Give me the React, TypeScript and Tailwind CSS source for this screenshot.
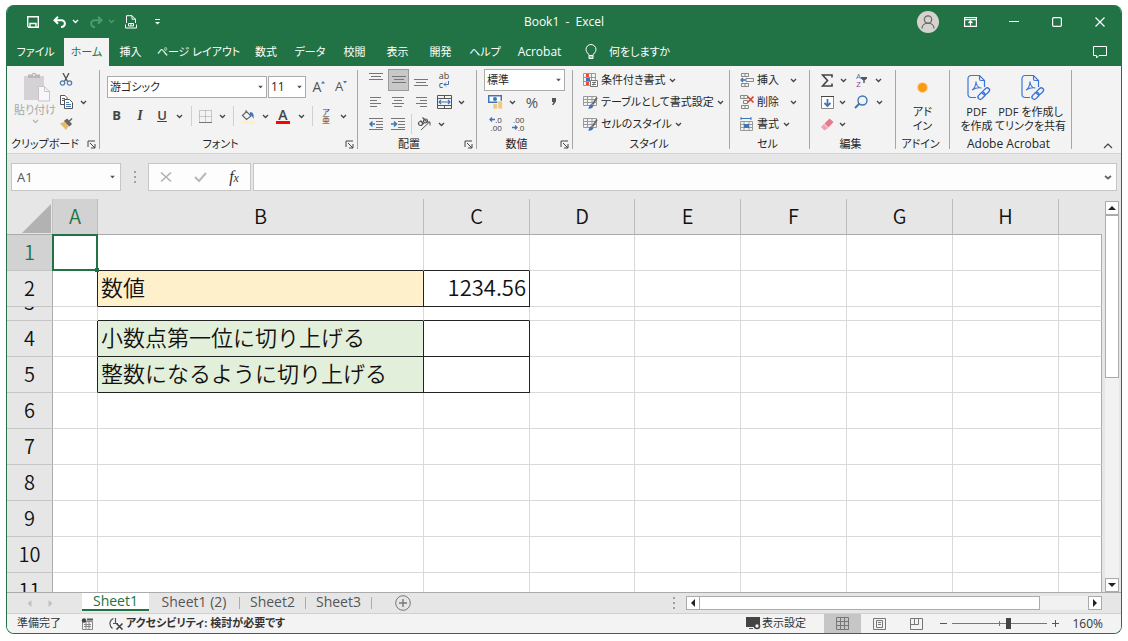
import type { ReactNode } from "react";

const UI_FONT = "font-['Open_Sans','Noto_Sans_CJK_JP',sans-serif]";
const CELL_FONT = "font-['Noto_Sans_CJK_JP',sans-serif] [font-feature-settings:normal]";

const TABS = [
  { label: "ファイル", width: "w-[57px]" },
  { label: "ホーム", width: "w-[45px]", active: true },
  { label: "挿入", width: "w-[43px]" },
  { label: "ページ レイアウト", width: "w-[93px]" },
  { label: "数式", width: "w-[42px]" },
  { label: "データ", width: "w-[46px]" },
  { label: "校閲", width: "w-[43px]" },
  { label: "表示", width: "w-[43px]" },
  { label: "開発", width: "w-[43px]" },
  { label: "ヘルプ", width: "w-[46px]" },
  { label: "Acrobat", width: "w-[63px]", latin: true },
];

const COLUMNS = ["A", "B", "C", "D", "E", "F", "G", "H", ""];
const ROWS = [1, 2, 3, 4, 5, 6, 7, 8, 9, 10, 11];

const VALUES: Record<string, string> = {
  B2: "数値",
  C2: "1234.56",
  B4: "小数点第一位に切り上げる",
  B5: "整数になるように切り上げる",
};

const FILLS: Record<string, string> = {
  B2: "bg-[#fff0cc]",
  B4: "bg-[#e2efda]",
  B5: "bg-[#e2efda]",
};

// cells whose right / bottom edge is part of a drawn table border
const DARK_RIGHT = ["A2", "B2", "C2", "A4", "B4", "C4", "A5", "B5", "C5"];
const DARK_BOTTOM = ["B1", "C1", "B2", "C2", "B3", "C3", "B4", "C4", "B5", "C5"];

function Icon({ w = 16, h = 16, children }: { w?: number; h?: number; children: ReactNode }) {
  return (
    <svg width={w} height={h} viewBox={`0 0 ${w} ${h}`} fill="none" stroke="#555" strokeWidth={1} className="shrink-0" aria-hidden="true">
      {children}
    </svg>
  );
}

function Chevron({ color = "#444" }: { color?: string }) {
  return (
    <svg width="7" height="5" viewBox="0 0 7 5" fill="none" stroke={color} strokeWidth={1.3} className="shrink-0" aria-hidden="true">
      <path d="M1 1l2.5 2.5L6 1" />
    </svg>
  );
}

function Caret() {
  return (
    <svg width="5" height="3" viewBox="0 0 5 3" fill="#555" className="pointer-events-none absolute right-1 top-1/2 -translate-y-1/2" aria-hidden="true">
      <path d="M0 0h5L2.5 3z" />
    </svg>
  );
}

function Tool({ label, width, children, className = "" }: { label: string; width: string; children: ReactNode; className?: string }) {
  return (
    <button type="button" aria-label={label} className={`flex h-[22px] shrink-0 items-center justify-center ${width} ${className}`}>
      {children}
    </button>
  );
}

function Select({ label, value, className }: { label: string; value: string; className: string }) {
  return (
    <span className={`relative block shrink-0 ${className}`}>
      <select aria-label={label} className="h-full w-full appearance-none border border-[#ababab] bg-white pl-[2px] text-[#262626] outline-none">
        <option>{value}</option>
      </select>
      <Caret />
    </span>
  );
}

function Group({ label, width, launcher, latin, children }: { label: string; width: string; launcher?: boolean; latin?: boolean; children: ReactNode }) {
  return (
    <section className={`flex shrink-0 pt-[3px] ${width}`}>
      <div className="flex min-w-0 flex-1 flex-col">
        <div className="h-[66px]">{children}</div>
        <div className="flex h-[18px] items-center justify-center">
          <span className={`flex-1 whitespace-nowrap pr-1 text-center ${latin ? "text-xs" : ""}`}>{label}</span>
          {launcher && (
            <button type="button" aria-label={`${label}の設定`} className="mr-[3px]">
              <Icon w={9} h={9}>
                <path d="M1 7V1h7M3 3l5 5M8 4v4H4" stroke="#444" />
              </Icon>
            </button>
          )}
        </div>
      </div>
      <div className="mb-1 mt-px w-px bg-[#a6a6a6]" />
    </section>
  );
}

function Lines({ rows }: { rows: [number, number, number][] }) {
  return (
    <Icon w={14} h={14}>
      {rows.map(([x1, x2, y]) => (
        <path key={y} d={`M${x1} ${y + 0.5}H${x2}`} stroke="#777" />
      ))}
    </Icon>
  );
}

function Separator() {
  return <span className="h-5 w-px shrink-0 bg-[#d0d0d0]" />;
}

function TitleBar() {
  return (
    <header className="grid h-[33px] grid-cols-[1fr_auto_1fr] items-center text-white">
      <div className="flex items-center pl-3">
        <Tool label="保存" width="w-7">
          <Icon w={12} h={12}>
            <path d="M.7.7h10.6v10.6H1.7l-1-1zM3 11V7.5h6V11" stroke="#fff" strokeWidth={1.4} />
          </Icon>
        </Tool>
        <Tool label="元に戻す" width="w-[25px]">
          <Icon w={14} h={12}>
            <path d="M5 .7L1.500 4.200 5 7.700M2 4.200h6.500a3.300 3.300 0 0 1 0 6.800H8" stroke="#fff" strokeWidth={2} />
          </Icon>
        </Tool>
        <Tool label="元に戻す履歴" width="w-[7px]"><Chevron color="#fff" /></Tool>
        <Tool label="やり直し" width="w-[25px]" className="ml-1">
          <Icon w={14} h={12}>
            <path d="M9 .7l3.500 3.500L9 7.700M12 4.200H5.500a3.300 3.300 0 0 0 0 6.800H6" stroke="#4f9a6f" strokeWidth={2} />
          </Icon>
        </Tool>
        <Tool label="やり直し履歴" width="w-[7px]"><Chevron color="#4f9a6f" /></Tool>
        <Tool label="印刷プレビュー" width="w-8">
          <Icon w={12} h={14}>
            <path d="M1.500 8V.7h5.500l3.500 3.500V8M7 .7v3.500h3.500M.5 9.500v3.500h11V9.500" stroke="#fff" />
            <path d="M3.500 8.500h5v2.500h-5zM6 8.500V11" stroke="#fff" />
          </Icon>
        </Tool>
        <Tool label="クイック アクセスのカスタマイズ" width="w-5">
          <Icon w={5} h={6}>
            <path d="M0 .5h5" stroke="#fff" />
            <path d="M0 3h5L2.500 5.500z" fill="#fff" stroke="none" />
          </Icon>
        </Tool>
      </div>
      <h1 className="whitespace-pre text-xs">Book1  -  Excel</h1>
      <div className="flex justify-end">
        <Tool label="アカウント" width="w-[43px]">
          <Icon w={22} h={22}>
            <circle cx="11" cy="11" r="11" fill="#d5d2d0" stroke="none" />
            <circle cx="11" cy="8.500" r="3.700" stroke="#666" strokeWidth={1.200} />
            <path d="M5 17.500c0-7 12-7 12 0" stroke="#666" strokeWidth={1.200} />
          </Icon>
        </Tool>
        <Tool label="リボンの表示オプション" width="w-[43px]">
          <Icon w={13} h={10}>
            <path d="M.6.6h11.800v8.800H.6zM.6 2.700h11.800M6.500 8.500v-4M4.500 6l2-2 2 2" stroke="#fff" strokeWidth={1.200} />
          </Icon>
        </Tool>
        <Tool label="最小化" width="w-[43px]">
          <Icon w={10} h={10}><path d="M0 4.500h10" stroke="#fff" /></Icon>
        </Tool>
        <Tool label="最大化" width="w-[43px]">
          <Icon w={10} h={10}><rect x=".6" y=".6" width="8.800" height="8.800" rx="1.200" stroke="#fff" strokeWidth={1.200} /></Icon>
        </Tool>
        <Tool label="閉じる" width="w-[43px]">
          <Icon w={10} h={10}><path d="M.5.5l9 9M9.500.5l-9 9" stroke="#fff" strokeWidth={1.200} /></Icon>
        </Tool>
      </div>
    </header>
  );
}

function TabBar() {
  return (
    <nav className="flex h-7 items-center text-white">
      {TABS.map((tab) => (
        <button
          key={tab.label}
          type="button"
          className={`h-7 shrink-0 whitespace-nowrap ${tab.width} ${tab.active ? "bg-[#f3f3f3] text-[#217346]" : ""} ${tab.latin ? "text-xs" : ""}`}
        >
          {tab.label}
        </button>
      ))}
      <button type="button" className="ml-[14px] flex items-center gap-3">
        <Icon w={12} h={16}>
          <path d="M4 11.500c0-2-3-2.700-3-6a5 5 0 0 1 10 0c0 3.300-3 4-3 6zM4 11.500v3h4v-3M4 13h4" stroke="#fff" />
        </Icon>
        何をしますか
      </button>
      <button type="button" aria-label="コメント" className="ml-auto mr-[14px]">
        <Icon w={14} h={13}>
          <path d="M.5.5h13v9H6l-2.500 2.500V9.500h-3z" stroke="#fff" />
        </Icon>
      </button>
    </nav>
  );
}

function ClipboardGroup() {
  return (
    <Group label="クリップボード" width="w-[93px]" launcher>
      <div className="flex pl-2">
        <button type="button" disabled className="flex h-[66px] w-10 flex-col items-center whitespace-nowrap pt-[3px] leading-4 text-[#a8a8a8]">
          <span className="pl-1">
            <Icon w={28} h={30}>
              <path d="M1 4h20v24H1z" fill="#d4d2d4" stroke="none" />
              <path d="M5 6V2.500h3.500a2.700 2.700 0 0 1 5 0H17V6z" fill="#b9b7b9" stroke="none" />
              <circle cx="11" cy="3" r="1" fill="#f3f3f3" stroke="none" />
              <path d="M15.500 14.500h6l5 5v9.500h-11zM21.500 14.500v5h5" fill="#f8f6f9" stroke="#c9c5cb" />
            </Icon>
          </span>
          <span>貼り付け</span>
          <span className="pt-px"><Chevron color="#b5b5b5" /></span>
        </button>
        <div className="ml-[2px]">
          <Tool label="切り取り" width="w-[18px]">
            <Icon w={14} h={14}>
              <path d="M4 0l4.500 8.500M10 0L5.500 8.500" stroke="#555" strokeWidth={1.400} />
              <circle cx="3.500" cy="10" r="2.200" stroke="#4a7ab5" strokeWidth={1.200} />
              <circle cx="10.500" cy="10" r="2.200" stroke="#4a7ab5" strokeWidth={1.200} />
            </Icon>
          </Tool>
          <div className="flex">
            <Tool label="コピー" width="w-[18px]">
              <Icon w={14} h={14}>
                <path d="M1.500.5h4.500l2 2v7h-6.500zM3 3.500h3M3 5.500h3" fill="#fff" />
                <path d="M5.500 4.500h5l3 3v6h-8z" fill="#fff" />
                <path d="M7 7.500h3M7 9.500h5M7 11.500h5" stroke="#4a7ab5" />
              </Icon>
            </Tool>
            <Tool label="コピーのオプション" width="w-4"><Chevron /></Tool>
          </div>
          <Tool label="書式のコピー/貼り付け" width="w-[18px]">
            <Icon w={14} h={14}>
              <path d="M1 6.500l5-2 4 4-3 4.500z" fill="#e9b96a" stroke="none" />
              <path d="M6 4l4.500 4.500 1.500-1.500L8 2.500zM9.500 5L13 1.500" fill="#666" strokeWidth={1.500} stroke="#666" />
            </Icon>
          </Tool>
        </div>
      </div>
    </Group>
  );
}

function FontGroup() {
  return (
    <Group label="フォント" width="w-[258px]" launcher>
      <div className="flex h-9 items-center pl-[7px]">
        <Select label="フォント名" value="游ゴシック" className="h-[22px] w-40" />
        <Select label="フォント サイズ" value="11" className="ml-px h-[22px] w-[38px] text-xs" />
        <Tool label="フォント サイズの拡大" width="w-6" className="ml-px text-sm text-[#555]">
          A<Icon w={4} h={12}><path d="M0 2.500l2-2.500 2 2.500z" fill="#3f74b5" stroke="none" /></Icon>
        </Tool>
        <Tool label="フォント サイズの縮小" width="w-5" className="text-[13px] text-[#555]">
          A<Icon w={4} h={12}><path d="M0 0l2 2.500L4 0z" fill="#3f74b5" stroke="none" /></Icon>
        </Tool>
      </div>
      <div className="flex h-[22px] items-center pl-1 text-[#444]">
        <Tool label="太字" width="w-[25px]" className="text-[13px] font-bold">B</Tool>
        <Tool label="斜体" width="w-[22px]" className="font-['Liberation_Serif',serif] text-sm font-bold italic">I</Tool>
        <Tool label="下線" width="w-[22px]" className="text-[13px] font-semibold underline">U</Tool>
        <Tool label="下線の種類" width="w-3"><Chevron /></Tool>
        <span className="w-[6px]" />
        <Separator />
        <Tool label="罫線" width="w-[26px]">
          <Icon w={13} h={13}>
            <path d="M.5.5h12v12H.5zM6.500.5v12M.5 6.500h12" stroke="#9a9a9a" strokeDasharray="1 1" />
            <path d="M0 12.500h13" stroke="#777" />
          </Icon>
        </Tool>
        <Tool label="罫線の種類" width="w-2"><Chevron /></Tool>
        <span className="w-[7px]" />
        <Separator />
        <Tool label="塗りつぶしの色" width="w-[27px]">
          <Icon w={14} h={15}>
            <path d="M1.500 6.500l4-4 4.500 4.500-4.500 3.500zM5 4V1" stroke="#666" strokeWidth={1.200} />
            <path d="M9 3c4 0 4 4 3.500 7-.8-2-2-4-3.500-4z" fill="#3f74b5" stroke="none" />
            <path d="M0 12h14v3H0z" fill="#ffefc5" stroke="none" />
          </Icon>
        </Tool>
        <Tool label="塗りつぶしの色の選択" width="w-2"><Chevron /></Tool>
        <Tool label="フォントの色" width="w-7">
          <span className="flex flex-col items-center text-sm font-semibold leading-3">
            A<span className="h-[3px] w-[14px] bg-[#f00]" />
          </span>
        </Tool>
        <Tool label="フォントの色の選択" width="w-2"><Chevron /></Tool>
        <span className="w-[7px]" />
        <Separator />
        <Tool label="ふりがな" width="w-[26px]">
          <span className="flex flex-col text-[8px] leading-[8px]"><span>ア</span><span>亜</span></span>
        </Tool>
        <Tool label="ふりがなの設定" width="w-2"><Chevron /></Tool>
      </div>
    </Group>
  );
}

function AlignmentGroup() {
  return (
    <Group label="配置" width="w-[119px]" launcher>
      <div className="flex pl-[6px]">
        <Tool label="上揃え" width="w-6"><Lines rows={[[0, 14, 0], [2, 12, 3], [0, 14, 6]]} /></Tool>
        <button type="button" aria-label="上下中央揃え" className="flex h-[22px] w-[21px] items-center justify-center border border-[#999] bg-[#c8c8c8]">
          <Lines rows={[[0, 14, 3], [2, 12, 6], [0, 14, 9]]} />
        </button>
        <Tool label="下揃え" width="w-6"><Lines rows={[[0, 14, 6], [2, 12, 9], [0, 14, 12]]} /></Tool>
        <Tool label="折り返して全体を表示する" width="w-[22px]">
          <span className="flex flex-col text-[9px] leading-[9px] text-[#444]">
            <span>ab</span>
            <span className="flex">
              c<Icon w={6} h={8}><path d="M5.500 1v3.500H1M3 2.500l-2 2 2 2" stroke="#3f74b5" /></Icon>
            </span>
          </span>
        </Tool>
      </div>
      <div className="flex pl-[6px]">
        <Tool label="左揃え" width="w-[23px]"><Lines rows={[[1, 12, 2], [1, 8, 5], [1, 12, 8], [1, 8, 11]]} /></Tool>
        <Tool label="中央揃え" width="w-[22px]"><Lines rows={[[1, 13, 2], [3, 11, 5], [1, 13, 8], [3, 11, 11]]} /></Tool>
        <Tool label="右揃え" width="w-6"><Lines rows={[[2, 13, 2], [6, 13, 5], [2, 13, 8], [6, 13, 11]]} /></Tool>
        <Tool label="セルを結合して中央揃え" width="w-[22px]">
          <Icon w={15} h={14}>
            <path d="M.5.5h14v13H.5zM.5 3.500h14M.5 10.500h14M7.500.5v3M7.500 10.500v3" />
            <path d="M2 7h11M4 5L2 7l2 2M11 5l2 2-2 2" stroke="#3f74b5" strokeWidth={1.200} />
          </Icon>
        </Tool>
        <Tool label="結合のオプション" width="w-3"><Chevron /></Tool>
      </div>
      <div className="flex items-center pl-[6px]">
        <Tool label="インデントを減らす" width="w-[23px]">
          <Icon w={14} h={12}>
            <path d="M0 .5h14M7 3.500h7M7 6.500h7M7 9.500h7M0 11.500h14" stroke="#777" />
            <path d="M6 6H1M3.500 3.500L1 6l2.500 2.500" stroke="#3f74b5" strokeWidth={1.500} />
          </Icon>
        </Tool>
        <Tool label="インデントを増やす" width="w-[22px]">
          <Icon w={14} h={12}>
            <path d="M0 .5h14M7 3.500h7M7 6.500h7M7 9.500h7M0 11.500h14" stroke="#777" />
            <path d="M0 6h5M3 3.500L5.500 6 3 8.500" stroke="#3f74b5" strokeWidth={1.500} />
          </Icon>
        </Tool>
        <span className="w-[2px]" />
        <Separator />
        <Tool label="方向" width="w-[25px]">
          <Icon w={15} h={14}>
            <circle cx="3.500" cy="6.500" r="2" strokeWidth={1.200} />
            <path d="M3.500 3.500l3.500 3.500M5.500.5l4 4" strokeWidth={1.200} />
            <circle cx="8.500" cy="4" r="2" strokeWidth={1.200} />
            <path d="M4 13l8.500-8M9.500 5h3.500v3.500" />
          </Icon>
        </Tool>
        <Tool label="方向のオプション" width="w-2"><Chevron /></Tool>
      </div>
    </Group>
  );
}

function NumberGroup() {
  return (
    <Group label="数値" width="w-24" launcher>
      <div className="pl-[7px]">
        <Select label="表示形式" value="標準" className="h-[22px] w-[81px]" />
        <div className="flex">
          <Tool label="通貨表示形式" width="w-[23px]">
            <Icon w={15} h={14}>
              <path d="M0 0h14v8H0z" fill="#3f74b5" stroke="none" />
              <path d="M1.500 1.500h11v5h-11z" fill="#fff" stroke="none" />
              <circle cx="7" cy="4" r="2" fill="#3f74b5" stroke="none" />
              <path d="M5 8.500h5V14H5zM9.500 6h5v8h-5z" fill="#edc98a" stroke="#fff" strokeWidth={0.5} />
            </Icon>
          </Tool>
          <Tool label="通貨の選択" width="w-[11px]"><Chevron /></Tool>
          <Tool label="パーセント スタイル" width="w-7" className="text-[15px] text-[#555]">%</Tool>
          <Tool label="桁区切りスタイル" width="w-4">
            <Icon w={6} h={8}><path d="M1 0h4v3.500L2.500 7 1 7l1.500-3H1z" fill="#555" stroke="none" /></Icon>
          </Tool>
        </div>
        <div className="flex text-[8px] leading-[8px] text-[#444]">
          <Tool label="小数点以下の表示桁数を増やす" width="w-[23px]">
            <span className="flex flex-col items-end">
              <span className="flex"><Icon w={6} h={7}><path d="M6 3.500H1M3 1.500l-2 2 2 2" stroke="#3f74b5" strokeWidth={1.3} /></Icon>.0</span>
              <span>.00</span>
            </span>
          </Tool>
          <Tool label="小数点以下の表示桁数を減らす" width="w-[22px]">
            <span className="flex flex-col items-end">
              <span>.00</span>
              <span className="flex"><Icon w={6} h={7}><path d="M0 3.500h5M3 1.500l2 2-2 2" stroke="#3f74b5" strokeWidth={1.3} /></Icon>.0</span>
            </span>
          </Tool>
        </div>
      </div>
    </Group>
  );
}

function BrushOverGrid() {
  return (
    <Icon w={15} h={14}>
      <path d="M.5 1.500h13v9H.5zM.5 4.500h13M.5 7.500h13M4.500 1.500v9M9 1.500v9" stroke="#999" />
      <path d="M5 13.500c1.500-1 1-3.500 3-4.500l2.500 2c-.5 2-3 3-5.500 2.500z" fill="#3f74b5" stroke="none" />
      <path d="M9.500 9.500l4.500-7" stroke="#666" strokeWidth={1.800} />
    </Icon>
  );
}

function StylesGroup() {
  const row = "flex h-[22px] items-center gap-[3px] whitespace-nowrap";
  return (
    <Group label="スタイル" width="w-[157px]">
      <div className="pl-[10px]">
        <button type="button" className={row}>
          <Icon w={15} h={14}>
            <path d="M.5.5h12v12H.5zM.5 4.500h12M.5 8.500h12M8.500.5v12" stroke="#999" />
            <path d="M3 1h3v3H3zM3 9h3v3H3z" fill="#e0503a" stroke="none" />
            <path d="M3 5h4v3H3z" fill="#3f74b5" stroke="none" />
            <path d="M7.500 7.500h7v6h-7z" fill="#fff" stroke="#777" />
            <path d="M9 9.500h4M9 11.500h4M12 8.500l-2 4" strokeWidth={0.8} />
          </Icon>
          条件付き書式<Chevron />
        </button>
        <button type="button" className={row}><BrushOverGrid />テーブルとして書式設定<Chevron /></button>
        <button type="button" className={row}><BrushOverGrid />セルのスタイル<Chevron /></button>
      </div>
    </Group>
  );
}

function CellsGroup() {
  const row = "flex h-[22px] items-center gap-[3px]";
  return (
    <Group label="セル" width="w-20">
      <div className="pl-[10px]">
        <button type="button" className={row}>
          <Icon w={14} h={14}>
            <path d="M1.500.5h7v3h-7zM5 .5v3M1.500 10.500h7v3h-7zM5 10.500v3M6 5.500h7.500v3H6z" stroke="#888" />
            <path d="M6 7H1M3 5L1 7l2 2" stroke="#3f74b5" strokeWidth={1.3} />
          </Icon>
          挿入<span className="pl-2"><Chevron /></span>
        </button>
        <button type="button" className={row}>
          <Icon w={14} h={14}>
            <path d="M.5.5h7v3h-7zM4 .5v3M1.500 10.500h7v3h-7zM5 10.500v3M3.500 5.500h4v3h-4z" stroke="#888" />
            <path d="M7.500 1.500l6 6M13.500 1.500l-6 6" stroke="#d8452e" strokeWidth={1.600} />
          </Icon>
          削除<span className="pl-2"><Chevron /></span>
        </button>
        <button type="button" className={row}>
          <Icon w={14} h={14}>
            <path d="M1 1.500h10M1 0v3M11 0v3" stroke="#3f74b5" />
            <path d="M.5 4.500h12v9H.5zM.5 7.500h12M.5 10.500h12M4 4.500v9M9 4.500v9" stroke="#999" />
            <path d="M4 7h5v4H4z" fill="#3f74b5" stroke="none" />
          </Icon>
          書式<span className="pl-px"><Chevron /></span>
        </button>
      </div>
    </Group>
  );
}

function EditingGroup() {
  return (
    <Group label="編集" width="w-[86px]">
      <div className="pl-[5px]">
        <div className="flex">
          <Tool label="オート SUM" width="w-6">
            <Icon w={12} h={13}><path d="M11 3.500V1H1.500l5 5.500-5 5.500H11V9.500" stroke="#444" strokeWidth={1.600} /></Icon>
          </Tool>
          <Tool label="オート SUM の種類" width="w-[9px]"><Chevron /></Tool>
          <Tool label="並べ替えとフィルター" width="w-[27px]">
            <span className="flex items-center">
              <span className="flex flex-col text-[8px] leading-[8px]"><span className="text-[#3f74b5]">A</span><span className="text-[#8a3fa0]">Z</span></span>
              <Icon w={6} h={6}><path d="M0 0h6v1.500L3.700 3.500V6H2.300V3.500L0 1.500z" fill="#555" stroke="none" /></Icon>
            </span>
          </Tool>
          <Tool label="フィルターの種類" width="w-[7px]"><Chevron /></Tool>
        </div>
        <div className="flex">
          <Tool label="フィル" width="w-6">
            <Icon w={13} h={13}>
              <path d="M.5.5h12v12H.5z" fill="#fff" stroke="#888" />
              <path d="M0 .5h13" stroke="#444" />
              <path d="M6.500 3v7M3.500 7l3 3 3-3" stroke="#3f74b5" strokeWidth={1.800} />
            </Icon>
          </Tool>
          <Tool label="フィルの種類" width="w-[7px]"><Chevron /></Tool>
          <Tool label="検索と選択" width="w-[30px]">
            <Icon w={14} h={14}>
              <circle cx="8.500" cy="5.500" r="4.500" stroke="#3f74b5" strokeWidth={1.400} />
              <path d="M5.500 8.500L1 13" stroke="#3f74b5" strokeWidth={2} />
            </Icon>
          </Tool>
          <Tool label="検索の種類" width="w-[7px]"><Chevron /></Tool>
        </div>
        <div className="flex">
          <Tool label="クリア" width="w-6">
            <Icon w={14} h={13}>
              <path d="M4.500 5.500L9.500.5 13.500 4 8.500 9.500z" fill="#e8788c" stroke="none" />
              <path d="M4 6L1 9l3.500 3.500 3.500-2.500z" fill="#f0a0ae" stroke="none" />
            </Icon>
          </Tool>
          <Tool label="クリアの種類" width="w-[7px]"><Chevron /></Tool>
        </div>
      </div>
    </Group>
  );
}

function PdfIcon() {
  return (
    <Icon w={24} h={28}>
      <path d="M9 23.500H4a3 3 0 0 1-3-3V4.500a3 3 0 0 1 3-3h8.500l5 5V13" stroke="#3d74d9" strokeWidth={1.2} />
      <path d="M12.500 1.500v3.500a1.500 1.500 0 0 0 1.500 1.500h3.500" stroke="#3d74d9" strokeWidth={1.2} />
      <path d="M5 16c2-.5 4-4.500 4-8.500 0 4 2.500 6.500 5.500 6.500-3-.5-7 .5-9.500 2z" stroke="#3d74d9" strokeWidth={1.1} />
      <rect x="10.500" y="19.500" width="8" height="4.600" rx="2.300" transform="rotate(-45 14.500 21.800)" stroke="#3d74d9" strokeWidth={1.4} />
      <rect x="15" y="15" width="8" height="4.600" rx="2.300" transform="rotate(-45 19 17.300)" stroke="#3d74d9" strokeWidth={1.4} />
    </Icon>
  );
}

function Ribbon() {
  const big = "flex h-[66px] shrink-0 flex-col items-center whitespace-nowrap leading-[14px]";
  return (
    <div className="flex h-[88px] border-b border-[#d2d2d2] bg-[#f3f3f3] text-[#262626]">
      <ClipboardGroup />
      <FontGroup />
      <AlignmentGroup />
      <NumberGroup />
      <StylesGroup />
      <CellsGroup />
      <EditingGroup />
      <Group label="アドイン" width="w-[54px]">
        <button type="button" className={`${big} w-full`}>
          <span className="flex h-9 items-center"><span className="size-[9px] rounded-full bg-[#fa9a14] ring-1 ring-[#fcd9a4]" /></span>
          <span>アド</span>
          <span>イン</span>
        </button>
      </Group>
      <Group label="Adobe Acrobat" width="w-[122px]" latin>
        <div className="flex pl-2">
          <button type="button" className={`${big} w-[37px]`}>
            <span className="flex h-9 items-center pl-1 pt-[2px]"><PdfIcon /></span>
            <span>PDF</span>
            <span>を作成</span>
          </button>
          <button type="button" className={`${big} w-[71px]`}>
            <span className="flex h-9 items-center pl-1 pt-[2px]"><PdfIcon /></span>
            <span>PDF を作成し</span>
            <span>てリンクを共有</span>
          </button>
        </div>
      </Group>
      <button type="button" aria-label="リボンを折りたたむ" className="mb-1 ml-auto mr-2 self-end">
        <Icon w={10} h={6}><path d="M1 5l4-4 4 4" stroke="#444" strokeWidth={1.2} /></Icon>
      </button>
    </div>
  );
}

function Dots() {
  return (
    <svg width="2" height="12" viewBox="0 0 2 12" fill="#a0a0a0" className="shrink-0" aria-hidden="true">
      <path d="M0 0h2v2H0zM0 5h2v2H0zM0 10h2v2H0z" />
    </svg>
  );
}

function FormulaBar() {
  return (
    <div className="flex h-[45px] shrink-0 items-start pl-1 pr-1 pt-[9px]">
      <div className="relative h-7 w-[110px] shrink-0">
        <input aria-label="名前ボックス" defaultValue="A1" className="h-full w-full border border-[#c6c6c6] bg-[#fdfdfd] px-[5px] text-[13px] text-[#555] outline-none" />
        <button type="button" aria-label="名前の一覧" className="absolute inset-y-0 right-[2px] w-4"><Caret /></button>
      </div>
      <span className="flex h-7 w-[27px] items-center justify-center"><Dots /></span>
      <div className="flex h-7 w-[103px] shrink-0 items-center justify-around border border-[#c6c6c6] bg-[#fdfdfd]">
        <button type="button" aria-label="キャンセル">
          <Icon w={12} h={12}><path d="M1 1.500l10 9M11 1.500l-10 9" stroke="#b0b0b0" strokeWidth={1.500} /></Icon>
        </button>
        <button type="button" aria-label="入力">
          <Icon w={13} h={12}><path d="M1 6l4 4 7-8" stroke="#b8b8b8" strokeWidth={2} /></Icon>
        </button>
        <button type="button" aria-label="関数の挿入" className="font-['Liberation_Serif',serif] text-base italic leading-6 text-[#333]">
          f<span className="text-xs">x</span>
        </button>
      </div>
      <div className="ml-[2px] flex h-7 flex-1 items-center border border-[#c6c6c6] bg-[#fdfdfd] pr-1">
        <input aria-label="数式バー" className="h-full min-w-0 flex-1 px-1 text-[13px] outline-none" />
        <button type="button" aria-label="数式バーの展開">
          <Icon w={8} h={5}><path d="M1 1l3 2.500L7 1" stroke="#666" strokeWidth={1.800} /></Icon>
        </button>
      </div>
    </div>
  );
}

function Sheet() {
  return (
    <table className={`w-full table-fixed border-separate border-spacing-0 text-[#111] ${CELL_FONT}`}>
      <colgroup>
        <col className="w-[46px]" />
        <col className="w-[45px]" />
        <col className="w-[326px]" />
        <col className="w-[106px]" />
        <col className="w-[105px]" />
        <col className="w-[106px]" />
        <col className="w-[106px]" />
        <col className="w-[106px]" />
        <col className="w-[106px]" />
        <col />
      </colgroup>
      <thead>
        <tr className="h-9 bg-[#e6e6e6] text-xl leading-7">
          <td className="border-b border-r border-[#ababab] border-r-[#c4c4c4] p-0">
            <svg width="29" height="29" viewBox="0 0 29 29" fill="#b2b2b2" className="ml-auto mr-px mt-1" aria-hidden="true">
              <path d="M29 0v29H0z" />
            </svg>
          </td>
          {COLUMNS.map((col) => (
            <th
              key={col}
              scope="col"
              className={`border-b border-[#ababab] p-0 pb-[2px] font-[350] ${col === "" ? "" : "border-r border-r-[#bcbcbc]"} ${col === "A" ? "bg-[#d2d2d2] text-[#217346]" : ""}`}
            >
              {col}
            </th>
          ))}
        </tr>
      </thead>
      <tbody>
        {ROWS.map((row) => (
          <tr key={row} className={row === 3 ? "h-[14px]" : "h-9"}>
            <th
              scope="row"
              className={`border-b border-r border-[#ababab] border-b-[#c4c4c4] p-0 text-xl font-[350] ${row === 3 ? "" : "pb-[2px] leading-7"} ${row === 1 ? "bg-[#d2d2d2] text-[#217346]" : "bg-[#e6e6e6]"}`}
            >
              {row === 3 ? <div className="flex h-[13px] items-end justify-center overflow-hidden pb-2 leading-5">3</div> : row}
            </th>
            {COLUMNS.map((col) => {
              const id = `${col}${row}`;
              return (
                <td
                  key={id}
                  className={`relative whitespace-nowrap border-b border-r p-0 px-[3px] text-[22px] font-[350] leading-7 ${row === 3 ? "" : "pb-[6px]"} ${FILLS[id] ?? ""} ${col === "C" ? "text-right" : ""} ${DARK_RIGHT.includes(id) ? "border-r-[#222]" : col === "" ? "border-r-[#ababab]" : "border-r-[#d9d9d9]"} ${DARK_BOTTOM.includes(id) ? "border-b-[#222]" : "border-b-[#d9d9d9]"}`}
                >
                  {VALUES[id]}
                  {id === "A1" && (
                    <span className="absolute -inset-px z-10 border-2 border-[#217346]">
                      <span className="absolute -bottom-[3px] -right-[3px] size-1 bg-[#217346]" />
                    </span>
                  )}
                </td>
              );
            })}
          </tr>
        ))}
      </tbody>
    </table>
  );
}

function ScrollButton({ label, d }: { label: string; d: string }) {
  return (
    <button type="button" aria-label={label} className="flex size-[14px] shrink-0 items-center justify-center border border-[#ababab] bg-white">
      <svg width="8" height="8" viewBox="0 0 8 8" fill="#222" className="shrink-0" aria-hidden="true"><path d={d} /></svg>
    </button>
  );
}

function SheetTabs() {
  const tab = "h-[18px] whitespace-nowrap leading-4 text-[#555]";
  return (
    <div className="flex h-[21px] shrink-0 items-start border-t border-[#ababab] pr-[19px] text-sm">
      <div className="flex w-[75px] shrink-0 items-center gap-4 pl-5 pt-[7px]">
        <Icon w={5} h={7}><path d="M4.500 0v7L.5 3.500z" fill="#c0c0c0" stroke="none" /></Icon>
        <Icon w={5} h={7}><path d="M.5 0v7l4-3.500z" fill="#c0c0c0" stroke="none" /></Icon>
      </div>
      <button type="button" className="h-[18px] w-[67px] border-b-2 border-[#217346] bg-white leading-4 text-[#217346]">Sheet1</button>
      <button type="button" className={`${tab} w-[90px]`}>Sheet1 (2)</button>
      <span className="mt-1 h-3 w-px bg-[#ababab]" />
      <button type="button" className={`${tab} w-[65px]`}>Sheet2</button>
      <span className="mt-1 h-3 w-px bg-[#ababab]" />
      <button type="button" className={`${tab} w-[65px]`}>Sheet3</button>
      <span className="mt-1 h-3 w-px bg-[#ababab]" />
      <button type="button" aria-label="新しいシート" className="ml-[23px] mt-[2px]">
        <Icon w={16} h={16}>
          <circle cx="8" cy="8" r="7.300" stroke="#777" />
          <path d="M8 4v8M4 8h8" stroke="#777" strokeWidth={1.400} />
        </Icon>
      </button>
      <div className="ml-auto flex items-center pt-[3px]">
        <Dots />
        <div className="ml-[11px] flex w-[416px] bg-[#f1f1f1]">
          <ScrollButton label="左へスクロール" d="M6 0v8L2 4z" />
          <div className="h-[14px] w-[340px] border border-l-0 border-[#ababab] bg-white" />
          <span className="flex-1" />
          <ScrollButton label="右へスクロール" d="M2 0v8l4-4z" />
        </div>
      </div>
    </div>
  );
}

function StatusBar() {
  return (
    <footer className="flex h-5 shrink-0 items-center border-t border-[#d0d0d0] bg-[#f3f3f3] pl-[10px] pr-[18px] text-[#333]">
      <span>準備完了</span>
      <span className="pl-5">
        <Icon w={12} h={12}>
          <path d="M1.500 3.500h10v8h-10zM3 6.500h7M3 8.500h7M5 3.500v8M8 3.500v8" stroke="#888" />
          <circle cx="3" cy="2.500" r="2.200" fill="#444" stroke="none" />
          <path d="M6 1.500h6" strokeWidth={2} />
        </Icon>
      </span>
      <button type="button" className="flex items-center gap-[2px] whitespace-nowrap pl-4 font-bold">
        <Icon w={15} h={13}>
          <path d="M4.500 1.500C.5 3-.5 8.500 3.500 11.500M6.500 1v5M4 6.500h5" strokeWidth={1.2} />
          <path d="M7.500 6.500l6 6M13.500 6.500l-6 6" stroke="#444" strokeWidth={1.600} />
        </Icon>
        アクセシビリティ: 検討が必要です
      </button>
      <button type="button" className="ml-auto flex items-center gap-px">
        <Icon w={15} h={13}>
          <path d="M0 0h14v7H9v3H0z" fill="#444" stroke="none" />
          <path d="M3 11.500h4" />
          <circle cx="11" cy="9" r="2.500" fill="#f3f3f3" stroke="#444" strokeWidth={1.600} />
        </Icon>
        表示設定
      </button>
      <button type="button" aria-label="標準" className="ml-[18px] flex h-[19px] w-[37px] items-center justify-center bg-[#c6c6c6]">
        <Icon w={13} h={13}><path d="M.5.500h12v12H.5zM.5 4.500h12M.5 8.500h12M4.500.5v12M8.500.5v12" stroke="#777" /></Icon>
      </button>
      <button type="button" aria-label="ページ レイアウト" className="flex w-[37px] justify-center">
        <Icon w={13} h={12}><path d="M.5.5h12v11H.5zM3.500 2.500h6v7h-6zM5 4.500h3M5 6.500h3" stroke="#777" /></Icon>
      </button>
      <button type="button" aria-label="改ページ プレビュー" className="flex w-[37px] justify-center">
        <Icon w={13} h={12}><path d="M.5.5h12v11H.5zM4.500.5v6M8.500.5v6M.5 6.500h8" stroke="#777" /></Icon>
      </button>
      <button type="button" aria-label="縮小" className="ml-1">
        <Icon w={9} h={9}><path d="M1 4.500h7" /></Icon>
      </button>
      <input
        type="range"
        aria-label="ズーム"
        min={0}
        max={100}
        defaultValue={60}
        className="mx-1 h-3 w-[95px] appearance-none bg-[linear-gradient(#777,#777),linear-gradient(#777,#777)] bg-[length:100%_1px,1px_5px] bg-center bg-no-repeat [&::-webkit-slider-thumb]:h-[11px] [&::-webkit-slider-thumb]:w-[5px] [&::-webkit-slider-thumb]:appearance-none [&::-webkit-slider-thumb]:bg-[#444]"
      />
      <button type="button" aria-label="拡大">
        <Icon w={9} h={9}><path d="M1 4.500h7M4.500 1v7" /></Icon>
      </button>
      <span className="w-[43px] text-right text-xs">160%</span>
    </footer>
  );
}

export default function App() {
  return (
    <div lang="ja" className={`flex h-screen bg-white px-[6px] pb-[7px] pt-[5px] text-[11px] [font-feature-settings:'palt'] ${UI_FONT}`}>
      <div className="flex min-w-0 flex-1 flex-col overflow-hidden rounded-lg border border-t-0 border-[#217346] bg-[#e6e6e6]">
        <div className="shrink-0 bg-[#217346]">
          <TitleBar />
          <TabBar />
          <Ribbon />
        </div>
        <FormulaBar />
        <main className="flex min-h-0 flex-1 gap-[3px] pr-[2px]">
          <div className="min-w-0 flex-1 overflow-hidden bg-white">
            <Sheet />
          </div>
          <div className="mt-[2px] flex w-[14px] shrink-0 flex-col bg-[#f1f1f1]">
            <ScrollButton label="上へスクロール" d="M0 6h8L4 2z" />
            <div className="h-[163px] border border-[#ababab] bg-white" />
            <span className="flex-1" />
            <ScrollButton label="下へスクロール" d="M0 2h8L4 6z" />
          </div>
        </main>
        <SheetTabs />
        <StatusBar />
      </div>
    </div>
  );
}
